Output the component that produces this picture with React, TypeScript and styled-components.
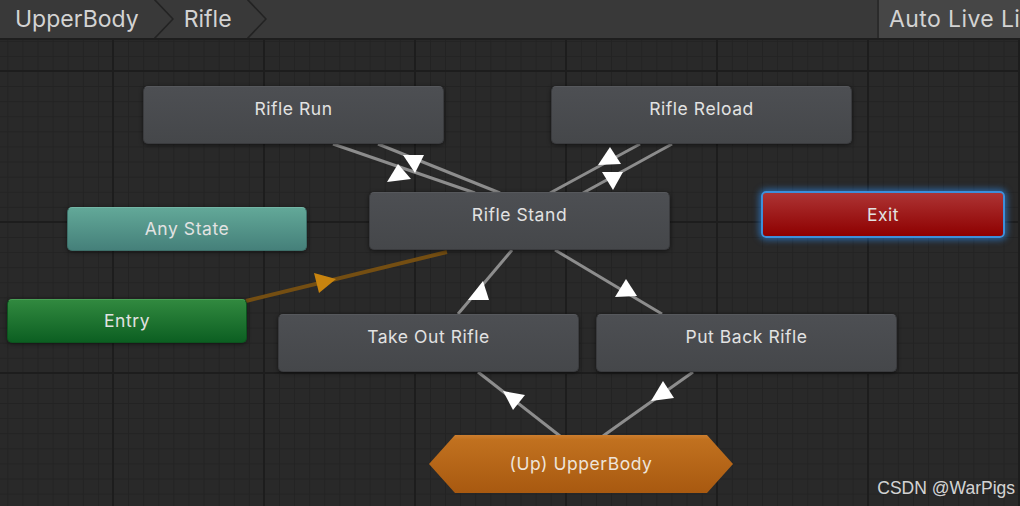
import React from "react";
import styled, { createGlobalStyle, css } from "styled-components";

const GlobalStyle = createGlobalStyle`
  html, body { margin: 0; padding: 0; background: #292929; }
  body { font-family: Inter, "Noto Sans", sans-serif; }
`;

const TOP = 40;

const Window = styled.div`
  width: 1020px;
  height: 506px;
  display: flex;
  flex-direction: column;
  overflow: hidden;
  background: #292929;
`;

const Toolbar = styled.header`
  flex: 0 0 38px;
  display: flex;
  align-items: stretch;
  background: #393939;
  border-bottom: 2px solid #1e1e1e;
  font-family: Inter, "Noto Sans", sans-serif;
  font-size: 23px;
  color: #d3d3d3;
`;

const Crumb = styled.div<{ $first?: boolean }>`
  display: flex;
  align-items: center;
  padding-left: ${(p) => (p.$first ? 15 : 10)}px;
`;

const CrumbText = styled.span`
  margin-right: 15px;
  white-space: nowrap;
`;

const ChevronSvg = styled.svg`
  display: block;
  width: 20px;
  height: 38px;
  flex: 0 0 20px;
`;

const Spacer = styled.div`
  flex: 1;
`;

const LiveLink = styled.div`
  flex: 0 0 131px;
  display: flex;
  align-items: center;
  padding-left: 10px;
  background: #464646;
  border-left: 2px solid #2b2b2b;
  white-space: nowrap;
  overflow: hidden;
  letter-spacing: 0.4px;
`;

const Canvas = styled.main`
  position: relative;
  flex: 1;
  background-color: #292929;
  background-image:
    linear-gradient(to right, #1d1d1d 2px, transparent 2px),
    linear-gradient(to bottom, #1d1d1d 2px, transparent 2px),
    linear-gradient(to right, #232323 1px, transparent 1px),
    linear-gradient(to bottom, #232323 1px, transparent 1px);
  background-size: 151px 151px, 151px 151px, 15.1px 15.1px, 15.1px 15.1px;
  background-position: 112px 30px, 112px 30px, 113px 31px, 113px 31px;
`;

const Wires = styled.svg`
  position: absolute;
  left: 0;
  top: 0;
  width: 1020px;
  height: 466px;
`;

type Kind = "state" | "any" | "entry" | "exit";

const kindStyles: Record<Kind, ReturnType<typeof css>> = {
  state: css`
    background: linear-gradient(to bottom, #4d4f53, #45474a);
    border: 1px solid #3a3b3e;
    border-top-color: #56585c;
    box-shadow: 0 1px 4px rgba(0, 0, 0, 0.55);
  `,
  any: css`
    background: linear-gradient(to bottom, #62a898, #45807a);
    border: 1px solid #3d6f69;
    border-top-color: #74b6a6;
    box-shadow: 0 1px 4px rgba(0, 0, 0, 0.5);
  `,
  entry: css`
    background: linear-gradient(to bottom, #31893f, #0c5f22);
    border: 1px solid #0c531e;
    border-top-color: #48a055;
    box-shadow: 0 1px 4px rgba(0, 0, 0, 0.5);
  `,
  exit: css`
    background: linear-gradient(to bottom, #ad3434, #8e0000);
    border: 2px solid #3d8fda;
    box-shadow: 0 0 6px 2px rgba(45, 130, 220, 0.65);
  `,
};

const Node = styled.div<{ $x: number; $y: number; $w: number; $h: number; $kind: Kind }>`
  position: absolute;
  left: ${(p) => p.$x}px;
  top: ${(p) => p.$y - TOP}px;
  width: ${(p) => p.$w}px;
  height: ${(p) => p.$h}px;
  box-sizing: border-box;
  border-radius: 5px;
  display: flex;
  justify-content: center;
  align-items: ${(p) => (p.$kind === "state" ? "flex-start" : "center")};
  color: #e2e2e2;
  font-size: 17.5px;
  letter-spacing: 0.55px;
  ${(p) => kindStyles[p.$kind]}
`;

const Label = styled.span<{ $top?: boolean }>`
  display: block;
  line-height: ${(p) => (p.$top ? "43px" : "20px")};
  white-space: nowrap;
`;

const Hex = styled.div<{ $x: number; $y: number; $w: number; $h: number }>`
  position: absolute;
  left: ${(p) => p.$x}px;
  top: ${(p) => p.$y - TOP}px;
  width: ${(p) => p.$w}px;
  height: ${(p) => p.$h}px;
  clip-path: polygon(26px 0, calc(100% - 26px) 0, 100% 50%, calc(100% - 26px) 100%, 26px 100%, 0 50%);
  background: linear-gradient(to bottom, #cc7e2f 0, #c1711f 8%, #a85910 100%);
  display: flex;
  align-items: center;
  justify-content: center;
  color: #eee4da;
  font-size: 17.5px;
  letter-spacing: 0.55px;
`;

const Watermark = styled.div`
  position: absolute;
  right: 5px;
  bottom: 7px;
  font-family: "Liberation Sans", Arial, sans-serif;
  font-size: 17.5px;
  color: rgba(235, 235, 235, 0.9);
  white-space: nowrap;
`;

const Chevron = () => (
  <ChevronSvg viewBox="0 0 20 38">
    <polyline points="0,-1 19,19 0,39" fill="none" stroke="#232323" strokeWidth="1.6" />
  </ChevronSvg>
);

const grayLines: [number, number, number, number][] = [
  [333, 144, 475, 193],
  [378, 144, 500, 193],
  [640, 144, 550, 193],
  [672, 144, 583, 193],
  [512, 250, 458, 314],
  [555, 250, 662, 314],
  [478, 372, 560, 436],
  [693, 372, 603, 436],
];

const whiteArrows = [
  "398,164 387,182 411,179",
  "403,155 424,155 415,173",
  "610,147 598,165 621,164",
  "602,172 623,172 613,190",
  "483,281 468,300 489,300",
  "626,279 615,297 637,296",
  "503,391 525,395 513,410",
  "663,381 674,398 651,401",
];

const states = [
  { label: "Rifle Run", x: 143, y: 86 },
  { label: "Rifle Reload", x: 551, y: 86 },
  { label: "Rifle Stand", x: 369, y: 192 },
  { label: "Take Out Rifle", x: 278, y: 314 },
  { label: "Put Back Rifle", x: 596, y: 314 },
];

export default function App() {
  return (
    <>
      <GlobalStyle />
      <Window>
        <Toolbar>
          <Crumb $first>
            <CrumbText>UpperBody</CrumbText>
            <Chevron />
          </Crumb>
          <Crumb>
            <CrumbText>Rifle</CrumbText>
            <Chevron />
          </Crumb>
          <Spacer />
          <LiveLink>Auto Live Link</LiveLink>
        </Toolbar>
        <Canvas>
          <Wires viewBox={`0 ${TOP} 1020 466`}>
            {grayLines.map(([x1, y1, x2, y2], i) => (
              <line key={i} x1={x1} y1={y1} x2={x2} y2={y2} stroke="#8d8d8d" strokeWidth="3" />
            ))}
            <line x1={246} y1={301} x2={447} y2={252} stroke="#744e12" strokeWidth="4" />
            {whiteArrows.map((pts, i) => (
              <polygon key={i} points={pts} fill="#ffffff" />
            ))}
            <polygon points="314,273 336,279 319,293" fill="#c8840f" />
          </Wires>

          {states.map((s) => (
            <Node key={s.label} $x={s.x} $y={s.y} $w={301} $h={58} $kind="state">
              <Label $top>{s.label}</Label>
            </Node>
          ))}
          <Node $x={67} $y={207} $w={240} $h={44} $kind="any">
            <Label>Any State</Label>
          </Node>
          <Node $x={7} $y={299} $w={240} $h={44} $kind="entry">
            <Label>Entry</Label>
          </Node>
          <Node $x={761} $y={191} $w={244} $h={47} $kind="exit">
            <Label>Exit</Label>
          </Node>
          <Hex $x={429} $y={435} $w={304} $h={58}>
            <Label>(Up) UpperBody</Label>
          </Hex>
          <Watermark>CSDN @WarPigs</Watermark>
        </Canvas>
      </Window>
    </>
  );
}
